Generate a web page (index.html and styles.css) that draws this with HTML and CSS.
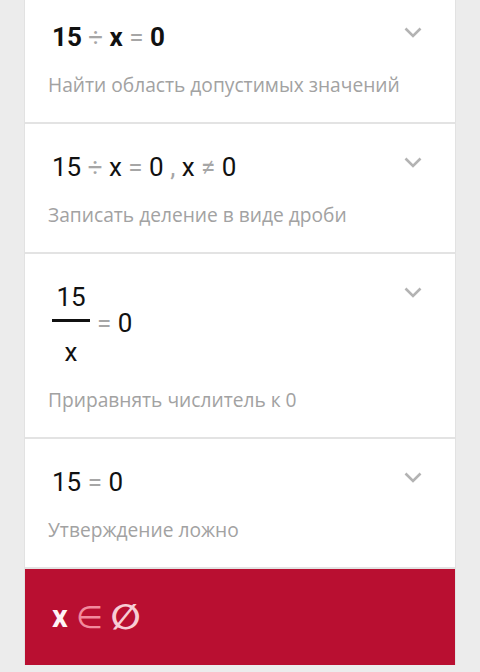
FILE: index.html
```html
<!DOCTYPE html>
<html lang="ru">
<head>
  <meta charset="UTF-8">
  <title>Шаги решения</title>
  <link rel="stylesheet" href="styles.css">
</head>
<body>

  <div class="card">

    <div class="step step-first">
      <div class="step-head">
        <div class="math bold">15 <span class="op">÷</span> x <span class="op">=</span> 0</div>
        <svg class="chevron" viewBox="0 0 18 11"><path d="M1.5 1.5 L9 9 L16.5 1.5"/></svg>
      </div>
      <p class="hint">Найти область допустимых значений</p>
    </div>

    <div class="step">
      <div class="step-head">
        <div class="math">15 <span class="op">÷</span> x <span class="op">=</span> 0 <span class="op">,</span> x <span class="op">≠</span> 0</div>
        <svg class="chevron" viewBox="0 0 18 11"><path d="M1.5 1.5 L9 9 L16.5 1.5"/></svg>
      </div>
      <p class="hint">Записать деление в виде дроби</p>
    </div>

    <div class="step">
      <div class="step-head">
        <div class="math">
          <span class="frac">
            <span class="num">15</span>
            <span class="bar"></span>
            <span class="den">x</span>
          </span>
          <span class="after-frac"><span class="op">=</span> 0</span>
        </div>
        <svg class="chevron" viewBox="0 0 18 11"><path d="M1.5 1.5 L9 9 L16.5 1.5"/></svg>
      </div>
      <p class="hint">Приравнять числитель к 0</p>
    </div>

    <div class="step">
      <div class="step-head">
        <div class="math">15 <span class="op">=</span> 0</div>
        <svg class="chevron" viewBox="0 0 18 11"><path d="M1.5 1.5 L9 9 L16.5 1.5"/></svg>
      </div>
      <p class="hint">Утверждение ложно</p>
    </div>

    <!-- итоговый ответ -->
    <div class="answer">
      <span class="ans-x">x</span>
      <span class="ans-in">∈</span>
      <span class="ans-empty">∅</span>
    </div>

  </div>

</body>
</html>
```

FILE: styles.css
```css
body {
  margin: 0;
  background-color: #ececec;
  font-family: Roboto, "Liberation Sans", sans-serif;
}
.card {
  margin: 0 25px;
  background: white;
  box-shadow: 0 0 0 1px #e2e2e2;
}
.step {
  padding: 28px 33px 25px 27px;
  border-bottom: 2px solid #e3e3e3;
}
.step-first {
  padding-top: 22px;
}
.step-head {
  display: flex;
  justify-content: space-between;
  align-items: flex-start;
}
.math {
  font-size: 26px;
  line-height: 30px;
  color: #111;
  display: flex;
  align-items: center;
  white-space: pre;
}
.math.bold {
  font-weight: bold;
}
.op {
  color: #a6a6a6;
  font-weight: normal;
}
.chevron {
  width: 18px;
  height: 11px;
  margin-top: 5px;
  fill: none;
  stroke: #b3b3b3;
  stroke-width: 2.6;
}
.hint {
  margin: 21px 0 0 -4px;
  font-family: "Open Sans", "Noto Sans", sans-serif;
  font-size: 19.2px;
  line-height: 24px;
  color: #a2a2a2;
}

/* дробь */
.frac {
  display: inline-flex;
  flex-direction: column;
  align-items: center;
  margin-right: 7px;
}
.num, .den {
  line-height: 30px;
}
.bar {
  width: 38px;
  height: 3px;
  background: #111;
  margin: 7px 0 15px;
}
.after-frac {
  margin-top: -3px;
}

/* ответ */
.answer {
  background-color: #b90f31;
  height: 96px;
  padding-left: 27px;
  display: flex;
  align-items: center;
  gap: 8px;
  line-height: 40px;
}
.ans-x {
  font-size: 31px;
  color: #fff4f6;
  font-weight: bold;
}
.ans-in {
  font-family: "DejaVu Sans", sans-serif;
  font-size: 31px;
  color: #f28a9d;
}
.ans-empty {
  font-family: "DejaVu Sans", sans-serif;
  font-size: 35px;
  font-weight: bold;
  color: #f7cdd5;
}
```
